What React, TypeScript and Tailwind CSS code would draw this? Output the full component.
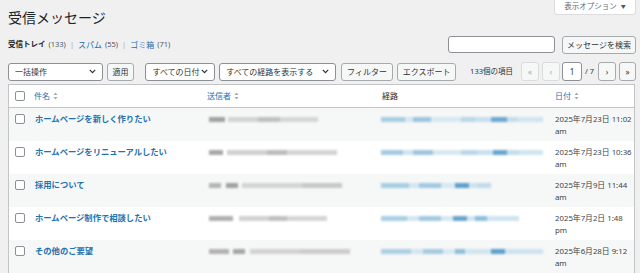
import React from "react";

type Seg = [number, string | null];

interface Row {
    title: string;
    date: string;
    ampm: string;
    sender: Seg[];
    route: Seg[];
}

const rows: Row[] = [
    {
        title: "ホームページを新しく作りたい",
        date: "2025年7月23日 11:02",
        ampm: "am",
        sender: [[16, "#a2a2a2"], [3, null], [30, "#d4d4d4"], [22, "#c0c0c0"], [38, "#d6d6d6"]],
        route: [[24, "#a6cde3"], [8, "#d3e6f1"], [18, "#9cc6df"], [30, "#d7e8f2"], [14, "#b9d8ea"], [16, "#c8e0ee"], [16, "#6fa8d0"], [10, "#c3ddec"], [26, "#cfe4f0"]],
    },
    {
        title: "ホームページをリニューアルしたい",
        date: "2025年7月23日 10:36",
        ampm: "am",
        sender: [[14, "#a8a8a8"], [4, null], [40, "#d0d0d0"], [20, "#bcbcbc"], [50, "#d4d4d4"]],
        route: [[22, "#a4cbe2"], [10, "#d0e5f0"], [20, "#9ec7df"], [28, "#d7e8f2"], [16, "#bad8ea"], [16, "#c9e1ee"], [14, "#6aa5ce"], [12, "#c5deec"], [24, "#d0e5f0"]],
    },
    {
        title: "採用について",
        date: "2025年7月9日 11:44",
        ampm: "am",
        sender: [[12, "#b4b4b4"], [5, null], [12, "#a0a0a0"], [4, null], [60, "#d4d4d4"], [40, "#c8c8c8"]],
        route: [[28, "#a6cde3"], [10, "#d3e6f1"], [22, "#a2c9e0"], [14, "#d8e9f2"], [14, "#5f9fcc"], [8, "#cde3ef"], [14, "#c0dbeb"]],
    },
    {
        title: "ホームページ制作で相談したい",
        date: "2025年7月2日 1:48",
        ampm: "pm",
        sender: [[24, "#b0b0b0"], [6, null], [30, "#d2d2d2"], [18, "#c0c0c0"], [40, "#d6d6d6"]],
        route: [[26, "#aacfe4"], [12, "#d3e6f1"], [22, "#a2c9e0"], [12, "#d6e8f1"], [14, "#6aa5ce"], [8, "#cfe4ef"], [12, "#8fbfdc"], [32, "#cfe4f0"]],
    },
    {
        title: "その他のご要望",
        date: "2025年6月28日 9:12",
        ampm: "am",
        sender: [[20, "#b2b2b2"], [4, null], [12, "#a6a6a6"], [5, null], [50, "#d2d2d2"], [50, "#cccccc"]],
        route: [[30, "#abd0e4"], [12, "#d3e6f1"], [20, "#a6cbe1"], [12, "#d8e9f2"], [10, "#8fbfdc"], [26, "#d0e5f0"], [14, "#5f9fcc"], [38, "#cde3ef"]],
    },
];

function Blur({ segs }: { segs: Seg[] }) {
    return (
        <div className="flex items-center h-[12px] blur-[1px]">
            {segs.map((s, i) => (
                <div
                    key={i}
                    className="h-[5px] shrink-0"
                    style={{ width: s[0], background: s[1] ?? "transparent" }}
                />
            ))}
        </div>
    );
}

function Check() {
    return <div className="w-[10px] h-[10px] rounded-[2px] border border-[#8c8f94] bg-white" />;
}

function Sort() {
    return (
        <svg width="5" height="8" viewBox="0 0 5 8" className="ml-[3px]">
            <path d="M2.5 0.5 L4.5 3 L0.5 3 Z" fill="#a7aaad" />
            <path d="M2.5 7.5 L4.5 5 L0.5 5 Z" fill="#a7aaad" />
        </svg>
    );
}

function Chevron() {
    return (
        <svg width="7" height="5" viewBox="0 0 7 5">
            <path d="M0.8 0.8 L3.5 3.6 L6.2 0.8" fill="none" stroke="#2c3338" strokeWidth="1.2" />
        </svg>
    );
}

function Select({ label, w }: { label: string; w: string }) {
    return (
        <div className={`${w} h-[18px] flex items-center justify-between pl-[6px] pr-[6px] bg-white border border-[#8c8f94] rounded-[3px] text-[8px] text-[#2c3338] whitespace-nowrap`}>
            <span>{label}</span>
            <Chevron />
        </div>
    );
}

function Btn({ label, className = "" }: { label: string; className?: string }) {
    return (
        <div className={`h-[18px] flex items-center justify-center bg-[#f6f7f7] border border-[#a7aaad] rounded-[3px] text-[8px] text-[#2c3338] whitespace-nowrap ${className}`}>
            {label}
        </div>
    );
}

export default function App() {
    return (
        <div
            className="w-[640px] h-[273px] overflow-hidden bg-[#f0f0f1] pl-[8px] pr-[4px] text-[#3c434a] whitespace-nowrap"
            style={{ fontFamily: '"Noto Sans", "Noto Sans CJK JP", sans-serif' }}
        >
            <div className="flex justify-between items-start h-[32px]">
                <h1 className="mt-[8px] text-[14px] leading-[20px] text-[#1d2327]">受信メッセージ</h1>
                <div className="w-[82px] h-[15px] flex items-center justify-center gap-[4px] bg-white border border-t-0 border-[#dcdcde] rounded-b-[3px] text-[7.5px] text-[#646970]">
                    <span>表示オプション</span>
                    <span className="text-[5px] text-[#50575e]">▼</span>
                </div>
            </div>

            <div className="flex justify-between items-center h-[17px] mt-[4px]">
                <div className="flex items-center text-[7.5px] gap-[3px]">
                    <span className="font-bold text-[#1d2327]">受信トレイ</span>
                    <span className="text-[#50575e]">(133)</span>
                    <span className="text-[#a7aaad] px-[1px]">|</span>
                    <span className="text-[#2271b1] text-[8px]">スパム</span>
                    <span className="text-[#50575e]">(55)</span>
                    <span className="text-[#a7aaad] px-[1px]">|</span>
                    <span className="text-[#2271b1] text-[8px]">ゴミ箱</span>
                    <span className="text-[#50575e]">(71)</span>
                </div>
                <div className="flex items-center gap-[7px]">
                    <div className="w-[107px] h-[17px] bg-white border border-[#8c8f94] rounded-[3px]" />
                    <Btn label="メッセージを検索" className="w-[74px] h-[17px]" />
                </div>
            </div>

            <div className="flex items-center h-[19px] mt-[9px]">
                <Select label="一括操作" w="w-[95px]" />
                <Btn label="適用" className="w-[28px] ml-[4px]" />
                <Select label="すべての日付" w="w-[70px] ml-[11px]" />
                <Select label="すべての経路を表示する" w="w-[117px] ml-[4px]" />
                <Btn label="フィルター" className="w-[53px] ml-[5px]" />
                <Btn label="エクスポート" className="w-[59px] ml-[4px]" />
                <span className="ml-[14px] text-[7.5px] text-[#2c3338]">133個の項目</span>
                <div className="ml-[8px] flex items-center">
                    <div className="w-[18px] h-[19px] flex items-center justify-center border border-[#dcdcde] bg-[#f6f7f7] rounded-[3px] text-[8px] text-[#a7aaad]">«</div>
                    <div className="ml-[3px] w-[18px] h-[19px] flex items-center justify-center border border-[#dcdcde] bg-[#f6f7f7] rounded-[3px] text-[8px] text-[#a7aaad]">‹</div>
                    <div className="ml-[2px] w-[20px] h-[19px] flex items-center justify-center border border-[#8c8f94] bg-white rounded-[3px] text-[8px] text-[#2c3338]">1</div>
                    <span className="ml-[3px] text-[7.5px] text-[#2c3338]">/ 7</span>
                    <div className="ml-[4px] w-[18px] h-[19px] flex items-center justify-center border border-[#a7aaad] bg-[#f6f7f7] rounded-[3px] text-[8px] text-[#2c3338]">›</div>
                    <div className="ml-[3px] w-[17px] h-[19px] flex items-center justify-center border border-[#a7aaad] bg-[#f6f7f7] rounded-[3px] text-[8px] text-[#2c3338]">»</div>
                </div>
            </div>

            <div className="mt-[3px] mr-[1px] border border-[#c3c4c7] bg-white">
                <div className="flex h-[23px] items-center border-b border-[#c3c4c7] text-[8px]">
                    <div className="w-[20px] pl-[6px] flex"><Check /></div>
                    <div className="w-[173px] pl-[5px] flex items-center text-[#2271b1]">件名<Sort /></div>
                    <div className="w-[175px] pl-[5px] flex items-center text-[#2271b1]">送信者<Sort /></div>
                    <div className="w-[173px] pl-[5px] text-[#1d2327]">経路</div>
                    <div className="flex-1 pl-[5px] flex items-center text-[#2271b1]">日付<Sort /></div>
                </div>
                {rows.map((r, i) => (
                    <div key={i} className={`flex h-[33px] pt-[5px] ${i % 2 === 0 ? "bg-[#f6f7f7]" : "bg-white"}`}>
                        <div className="w-[20px] pl-[6px] pt-[1px]"><Check /></div>
                        <div className="w-[173px] pl-[6px] text-[8.3px] leading-[12px] font-bold text-[#2271b1]">{r.title}</div>
                        <div className="w-[175px] pl-[7px]"><Blur segs={r.sender} /></div>
                        <div className="w-[173px] pl-[4px]"><Blur segs={r.route} /></div>
                        <div className="flex-1 pl-[5px] text-[7.8px] leading-[12px] text-[#3c434a]">
                            <div>{r.date}</div>
                            <div>{r.ampm}</div>
                        </div>
                    </div>
                ))}
            </div>
        </div>
    );
}
